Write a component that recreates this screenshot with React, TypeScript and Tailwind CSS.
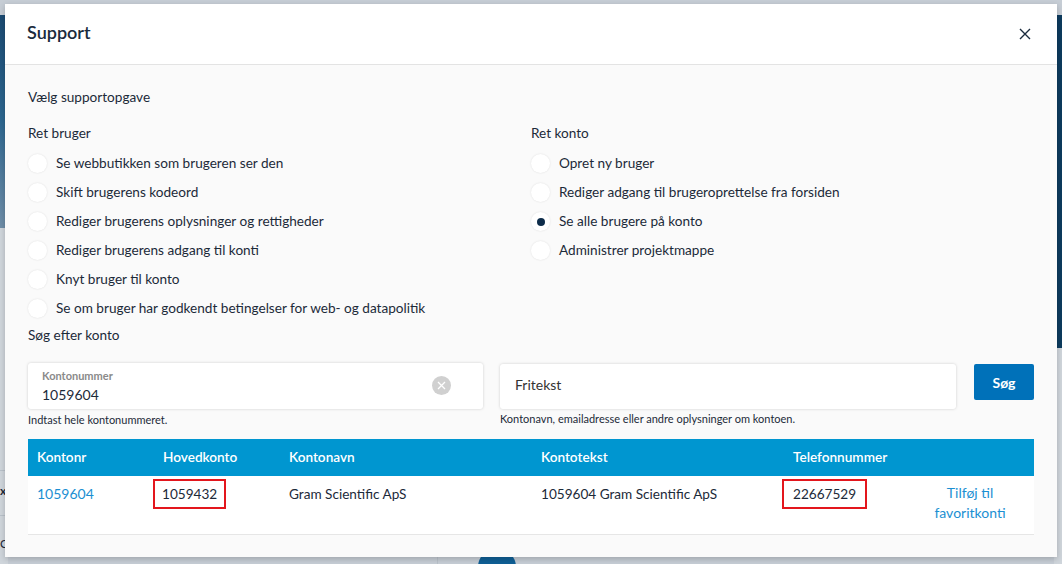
import React from "react";

const font = { fontFamily: "Lato, 'Noto Sans', sans-serif" };

function Radio({ label, checked = false }: { label: string; checked?: boolean }) {
  return (
    <div className="flex h-[29px] items-center">
      <span className="flex h-[19px] w-[19px] items-center justify-center rounded-full bg-white shadow-[0_0_2px_rgba(0,0,0,0.12)]">
        {checked && <span className="h-[8px] w-[8px] rounded-full bg-[#0d2c4a]" />}
      </span>
      <span className="ml-[9px] text-[13.6px] text-[#1c2a39]">{label}</span>
    </div>
  );
}

export default function App() {
  const left = [
    "Se webbutikken som brugeren ser den",
    "Skift brugerens kodeord",
    "Rediger brugerens oplysninger og rettigheder",
    "Rediger brugerens adgang til konti",
    "Knyt bruger til konto",
    "Se om bruger har godkendt betingelser for web- og datapolitik",
  ];
  const right = [
    "Opret ny bruger",
    "Rediger adgang til brugeroprettelse fra forsiden",
    "Se alle brugere på konto",
    "Administrer projektmappe",
  ];
  return (
    <div className="relative h-[564px] w-[1062px] overflow-hidden bg-[#c6cdd5]" style={font}>
      {/* backdrop page */}
      <div className="absolute left-0 top-[15px] h-[213px] w-[8px] bg-gradient-to-b from-[#1b4a72] via-[#2d6790] to-[#6f8ea8]" />
      <div className="absolute left-0 top-[228px] h-[336px] w-[8px] bg-[#cfd5db]" />
      <div className="absolute left-0 top-[470px] h-px w-[8px] bg-[#b9c1c9]" />
      <div className="absolute left-0 top-[515px] h-px w-[8px] bg-[#b9c1c9]" />
      <div className="absolute left-0 top-[482px] text-[12px] font-bold text-[#1c2a39]">x</div>
      <div className="absolute left-0 top-[535px] text-[12px] text-[#1c2a39]">C</div>
      <div className="absolute right-0 top-[15px] h-[333px] w-[8px] bg-[#0d3b5e]" />
      <div className="absolute right-0 top-[348px] h-[216px] w-[8px] bg-[#cfd5db]" />
      <div className="absolute left-[478px] top-[548px] h-[40px] w-[38px] rounded-full bg-[#0f5f95]" />
      <div className="absolute left-[437px] top-[557px] h-[7px] w-px bg-[#b9c1c9]" />

      {/* modal */}
      <div className="absolute left-[5px] top-[4px] flex h-[553px] w-[1052px] flex-col bg-[#fafafa] shadow-[0_2px_6px_rgba(0,0,0,0.2)]">
        <div className="flex h-[61px] shrink-0 items-center justify-between border-b border-[#e3e3e3] bg-white pb-[4px] pl-[22px] pr-[26px]">
          <h1 className="text-[18px] font-semibold text-[#1a2b3d]">Support</h1>
          <svg width="12" height="12" viewBox="0 0 12 12" className="mt-[3px] text-[#1a2b3d]">
            <path d="M1 1L11 11M11 1L1 11" stroke="currentColor" strokeWidth="1.4" />
          </svg>
        </div>
        <div className="flex flex-col px-[23px] pt-[24px]">
          <div className="text-[13.6px] leading-[17px] text-[#1c2a39]">Vælg supportopgave</div>
          <div className="mt-[19px] grid grid-cols-[503px_1fr]">
            <div>
              <div className="text-[13.6px] leading-[17px] text-[#1c2a39]">Ret bruger</div>
              <div className="mt-[7px]">
                {left.map((l) => (
                  <Radio key={l} label={l} />
                ))}
              </div>
            </div>
            <div>
              <div className="text-[13.6px] leading-[17px] text-[#1c2a39]">Ret konto</div>
              <div className="mt-[7px]">
                {right.map((l, i) => (
                  <Radio key={l} label={l} checked={i === 2} />
                ))}
              </div>
            </div>
          </div>
          <div className="mt-[4px] text-[13.6px] leading-[17px] text-[#1c2a39]">Søg efter konto</div>
          <div className="mt-[19px] flex items-start">
            <div className="w-[455px]">
              <div className="relative h-[46px] rounded-[3px] bg-white shadow-[0_0_3px_rgba(0,0,0,0.18)]">
                <div className="absolute left-[14px] top-[5px] text-[11px] font-bold text-[#8a8a8a]">Kontonummer</div>
                <div className="absolute left-[14px] top-[21px] text-[14px] text-[#1c2a39]">1059604</div>
                <span className="absolute left-[404px] top-[13px] flex h-[19px] w-[19px] items-center justify-center rounded-full bg-[#d0d0d0]">
                  <svg width="9" height="9" viewBox="0 0 9 9">
                    <path d="M1 1L8 8M8 1L1 8" stroke="white" strokeWidth="1.3" />
                  </svg>
                </span>
              </div>
              <div className="mt-[3px] text-[11px] text-[#1c2a39]">Indtast hele kontonummeret.</div>
            </div>
            <div className="ml-[17px] mt-[1px] w-[456px]">
              <div className="flex h-[45px] items-center rounded-[3px] bg-white pb-[4px] pl-[15px] text-[14px] text-[#333] shadow-[0_0_3px_rgba(0,0,0,0.18)]">
                Fritekst
              </div>
              <div className="mt-[2px] text-[11px] text-[#1c2a39]">Kontonavn, emailadresse eller andre oplysninger om kontoen.</div>
            </div>
            <button className="ml-[18px] mt-[1px] flex h-[36px] w-[60px] items-center justify-center rounded-[2px] bg-[#0071b9] text-[14px] font-bold text-white">
              Søg
            </button>
          </div>
          <div className="mt-[10px] w-[1006px]">
            <div className="grid h-[37px] grid-cols-[126px_126px_252px_252px_127px_1fr] items-center bg-[#0096d0] pl-[9px] text-[13.6px] font-semibold text-white">
              <div>Kontonr</div>
              <div>Hovedkonto</div>
              <div>Kontonavn</div>
              <div>Kontotekst</div>
              <div>Telefonnummer</div>
              <div />
            </div>
            <div className="grid h-[59px] grid-cols-[126px_126px_252px_252px_127px_1fr] items-start border-b border-[#e6e6e6] bg-white pl-[9px] pt-[3px] text-[13.6px] text-[#1c2a39]">
              <div className="pt-[4px] text-[14px] text-[#1b8fd2]">1059604</div>
              <div className="-ml-[10px]">
                <span className="inline-block border-2 border-[#e3161d] px-[7px] py-[3px] text-[13.6px]">1059432</span>
              </div>
              <div className="pt-[5px]">Gram Scientific ApS</div>
              <div className="pt-[5px]">1059604 Gram Scientific ApS</div>
              <div className="-ml-[11px]">
                <span className="inline-block border-2 border-[#e3161d] px-[9px] py-[3px] text-[13.6px]">22667529</span>
              </div>
              <div className="pr-[14px] pt-[4px] text-center text-[14px] leading-[20px] text-[#1b8fd2]">
                Tilføj til
                <br />
                favoritkonti
              </div>
            </div>
          </div>
        </div>
      </div>
    </div>
  );
}
